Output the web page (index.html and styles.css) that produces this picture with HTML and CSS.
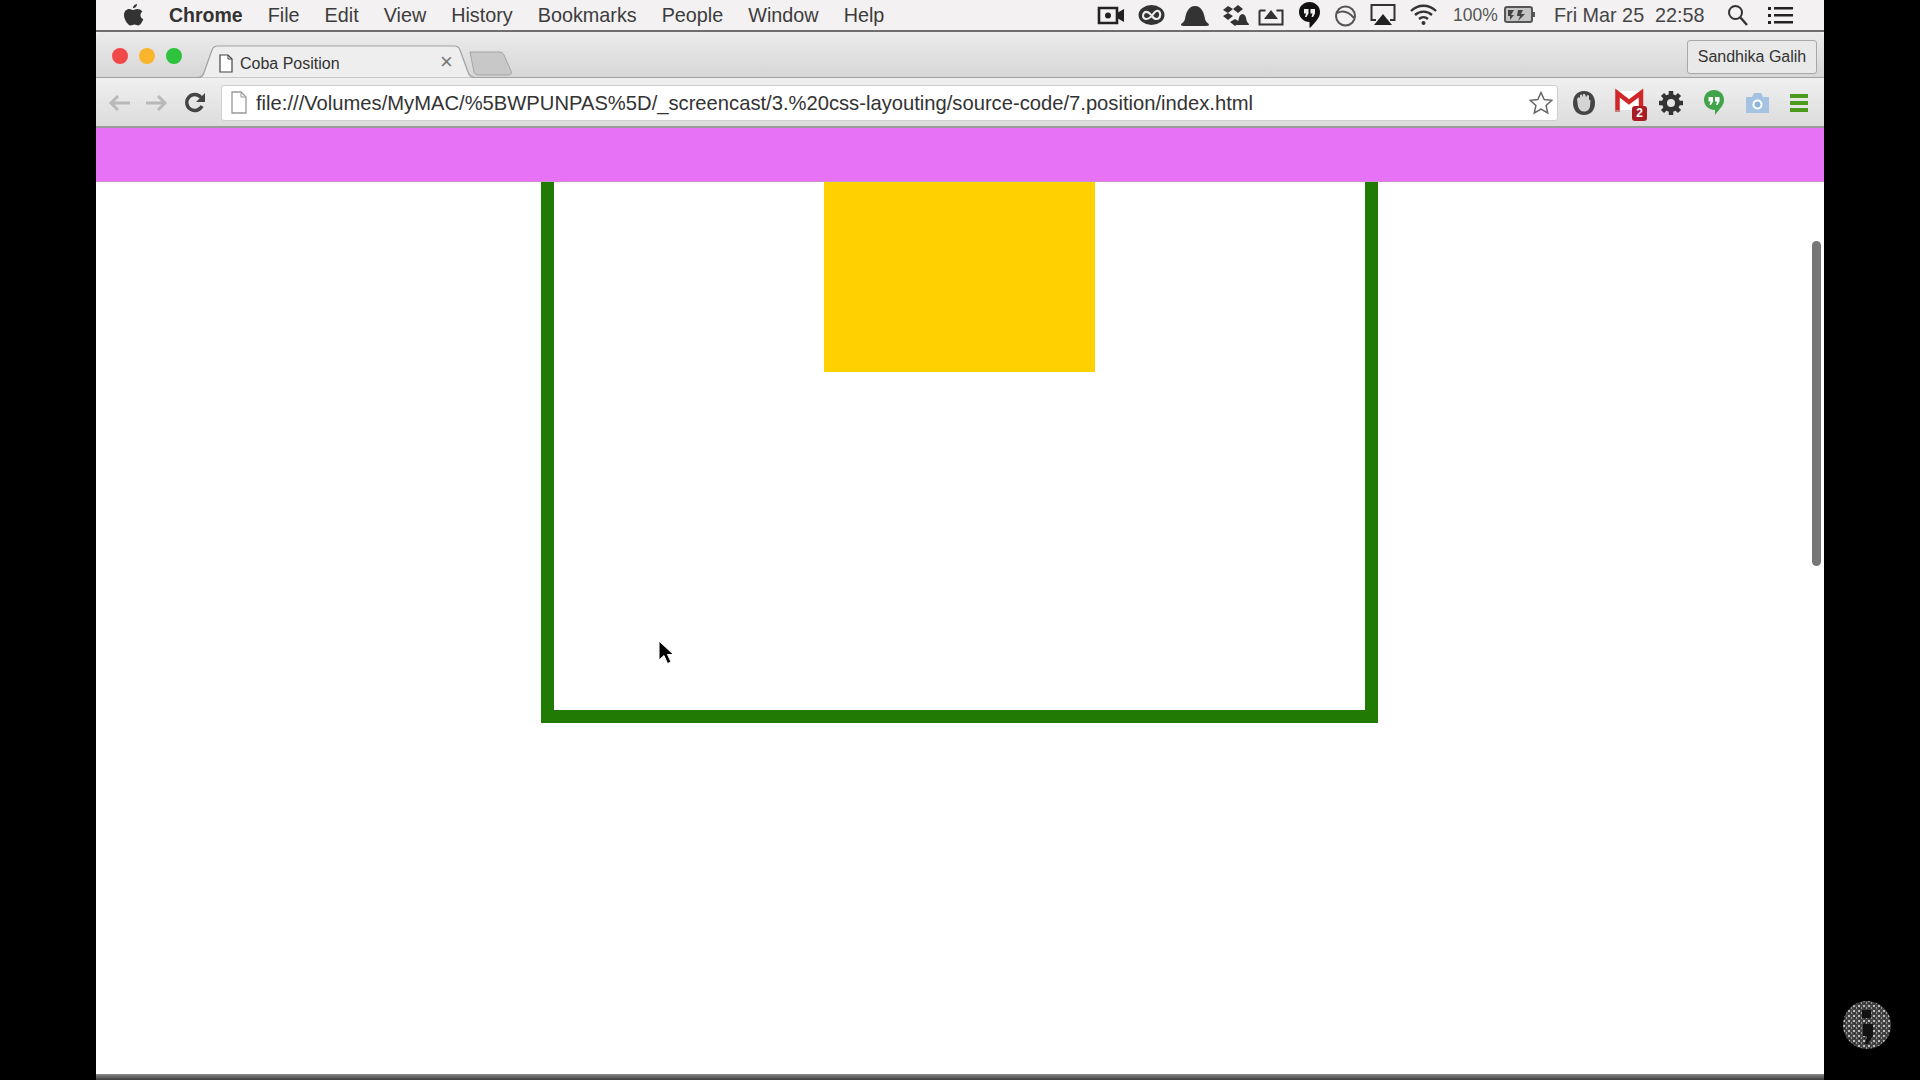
FILE: index.html
```html
<!DOCTYPE html>
<html lang="en">
<head>
<meta charset="utf-8">
<title>Coba Position</title>
<link rel="stylesheet" href="styles.css">
</head>
<body>
<div class="screen">
  <header class="menubar">
    <svg class="apple" width="22" height="24" viewBox="0 0 22 24"><path fill="#333" d="M15 1c.2 2-1.700 4.300-4 4.200C10.800 3.200 12.900 1.100 15 1zM20.500 8.500c-3 2-2.500 6.300.8 7.800-.9 2.500-3 6.200-5.100 6.200-1.300 0-2.100-.9-3.700-.9s-2.500.9-3.800.9C5.900 22.500 2 16.500 2 12.300 2 8.200 4.600 6.100 7.200 6.100c1.500 0 2.800 1 3.800 1s2.400-1.100 4.200-1.100c1.900 0 3.900.8 5.300 2.500z"/></svg>
    <nav class="menus">
      <span class="menu-app">Chrome</span>
      <span>File</span>
      <span>Edit</span>
      <span>View</span>
      <span>History</span>
      <span>Bookmarks</span>
      <span>People</span>
      <span>Window</span>
      <span>Help</span>
    </nav>
    <div class="tray">
      <svg width="41" height="24" viewBox="0 0 41 24"><path fill="none" stroke="#222" stroke-width="2.600" d="M2 5h18v15H2z"/><path fill="#222" d="M20 10l7-4v13l-7-4z"/><circle cx="11" cy="12.500" r="3" fill="#222"/></svg>
      <svg width="42" height="24" viewBox="0 0 42 24"><ellipse cx="13.500" cy="12" rx="13" ry="10" fill="#333"/><path fill="none" stroke="#eee" stroke-width="2.200" d="M13 12c-2-3-5-4-7-2s-1 6 2 6 6-3 8-6 5-3 6 0-1 6-3 6-4-1-5-3"/></svg>
      <svg width="42" height="24" viewBox="0 0 42 24"><path fill="#333" d="M1 22c0-2 3-2 4-6 1-7 4-13 10-13s9 6 10 13c1 4 4 4 4 6 0 1-2 1-14 1S1 23 1 22z"/></svg>
      <svg width="36" height="24" viewBox="0 0 36 24"><g fill="#333"><path d="M1 7l5-4 5 3-5 4zM11 6l5-4 5 4-5 4zM1 13l5-3 5 3-5 4zM8 19l5-3 5 3-5 4z"/><path d="M14 22c0-2 2-2 2.500-5 .5-4 2-6 4-6s3.500 2 4 6c.5 3 2.500 3 2.500 5z"/></g></svg>
      <svg width="41" height="24" viewBox="0 0 41 24"><path fill="none" stroke="#333" stroke-width="2" d="M1.500 7.500h6M18.500 7.500h6v14h-23v-14"/><path fill="#333" d="M6 16L13 7l7 9z"/></svg>
      <svg width="36" height="28" viewBox="0 0 36 28"><path fill="#111" d="M10.500 1C16.300 1 21 5.400 21 11c0 6-5 10-9 15l-1.500 1v-6C4.700 21 0 16.600 0 11S4.700 1 10.500 1z"/><path fill="#eee" d="M5 8h4.500v4.500L7.500 16H6l1-3.500H5zM11.500 8H16v4.500L14 16h-1.500l1-3.500h-2z"/></svg>
      <svg width="35" height="24" viewBox="0 0 35 24"><circle cx="10.500" cy="13" r="9.500" fill="none" stroke="#555" stroke-width="2"/><path fill="none" stroke="#555" stroke-width="2" d="M2 10c6-3 12-1 17 5"/></svg>
      <svg width="40" height="24" viewBox="0 0 40 24"><path fill="none" stroke="#333" stroke-width="2" d="M6 17H1.500V2h23v15H20"/><path fill="#222" d="M13 11l9 11H4z"/></svg>
      <svg width="43" height="24" viewBox="0 0 43 24"><g fill="none" stroke="#333" stroke-width="2.400"><path d="M1 8c7-7 18-7 25 0"/><path d="M5 12c5-4.500 12-4.500 17 0"/><path d="M9 16c3-2.500 6-2.500 9 0"/></g><circle cx="13.500" cy="20" r="2" fill="#333"/></svg>
      <span class="tray-pct">100%</span>
      <svg class="battery" width="32" height="18" viewBox="0 0 32 18"><rect x="1" y="1" width="27" height="15" rx="2" fill="#c4c4c4" stroke="#555" stroke-width="2"/><path fill="#444" d="M4 4h6l-3 5h3l-4 5v-4H4zM14 4h5l-2 4h4l-7 7 2-5h-3z"/><rect x="29" y="6" width="2" height="5" fill="#555"/></svg>
      <span class="tray-date">Fri Mar 25&nbsp; 22:58</span>
      <svg class="search" width="21" height="22" viewBox="0 0 21 22"><circle cx="8.500" cy="8.500" r="6.500" fill="none" stroke="#333" stroke-width="2"/><path stroke="#333" stroke-width="2.400" d="M13 13l7 8"/></svg>
      <svg class="list" width="25" height="18" viewBox="0 0 25 18"><path fill="#222" d="M0 1h3v3H0zM6 1h19v2.600H6zM0 8h3v3H0zM6 8h19v2.600H6zM0 15h3v3H0zM6 15h19v2.600H6z"/></svg>
    </div>
  </header>

  <section class="window">
    <div class="tabstrip">
      <div class="lights">
        <i class="light light-red"></i>
        <i class="light light-yellow"></i>
        <i class="light light-green"></i>
      </div>
      <div class="tab">
        <svg class="tab-shape" width="283" height="33" viewBox="0 0 283 33"><path fill="#eeeeee" stroke="#a0a0a0" stroke-width="1.200" d="M0 32.500h3c4 0 5-2 6-5L17 5c1-3 3-4 6-4h236c3 0 5 1 6 4l8 22c1 3 3 5.500 7 5.500h3"/></svg>
        <svg class="doc" width="14" height="19" viewBox="0 0 14 19"><path fill="#fff" stroke="#444" stroke-width="1.200" d="M1 1h8l4 4v13H1z"/><path fill="none" stroke="#444" d="M9 1v4h4"/></svg>
        <span class="tab-title">Coba Position</span>
        <span class="tab-close">×</span>
      </div>
      <svg class="newtab" width="44" height="25" viewBox="0 0 44 25"><path fill="#c9c8c9" stroke="#a5a5a5" d="M1 1h29c3 0 4 1 5 3l7 16c1 3 0 4-3 4H10c-3 0-4-1-5-3z"/></svg>
      <div class="profile">Sandhika Galih</div>
    </div>
    <div class="toolbar">
      <svg class="nav-icon" width="22" height="18" viewBox="0 0 22 18"><path fill="none" stroke="#b9b9b9" stroke-width="3" d="M10 2L3 9l7 7M3 9h19"/></svg>
      <svg class="nav-icon" width="22" height="18" viewBox="0 0 22 18"><path fill="none" stroke="#b9b9b9" stroke-width="3" d="M12 2l7 7-7 7M19 9H0"/></svg>
      <svg class="nav-icon" width="22" height="22" viewBox="0 0 22 22"><path fill="none" stroke="#444" stroke-width="3.400" d="M18 14a8 8 0 1 1-1-8.500"/><path fill="#444" d="M21 1v9h-9z"/></svg>
      <div class="omnibox">
        <svg class="omni-doc" width="16" height="23" viewBox="0 0 16 23"><path fill="#fff" stroke="#999" stroke-width="1.300" d="M1 1h9l5 5v16H1z"/><path fill="none" stroke="#999" d="M10 1v5h5"/></svg>
        <span class="url">file:///Volumes/MyMAC/%5BWPUNPAS%5D/_screencast/3.%20css-layouting/source-code/7.position/index.html</span>
        <svg class="star" width="24" height="24" viewBox="0 0 24 24"><path fill="#fff" stroke="#666" stroke-width="1.500" d="M12 1.500l3.200 7 7.600.8-5.700 5.100 1.600 7.500L12 18l-6.700 3.900 1.600-7.500L1.200 9.300l7.600-.8z"/></svg>
      </div>
      <div class="ext">
        <svg class="ext-shield" width="24" height="26" viewBox="0 0 24 26"><path fill="#444" d="M12 1c7 0 11 5 11 12s-4 12-11 12S1 20 1 13 5 1 12 1z"/><path fill="#d4d4d4" d="M5 9l1.500-2 1.500 1V5l1.800-.5L11 7V4h2l1 3 1.500-2 1.500.5v4l1.500 1-.5 6c-.5 3-3 5-6 5s-5-2-6-5z"/></svg>
        <span class="gmail">
          <svg width="33" height="32" viewBox="0 0 33 32"><path fill="#fff" d="M2 4h26v19H2z"/><path fill="none" stroke="#d02828" stroke-width="4.500" d="M3.500 23V6L15 15 27 6v17"/><path fill="none" stroke="#a81c24" d="M1 24h5M25 24h5"/></svg>
          <span class="gmail-badge">2</span>
        </span>
        <svg class="ext-gear" width="24" height="24" viewBox="0 0 24 24"><circle cx="12" cy="12" r="6.500" fill="none" stroke="#333" stroke-width="5"/><path stroke="#333" stroke-width="4.500" d="M12 0v5M12 19v5M0 12h5M19 12h5M3.500 3.500L7 7M17 17l3.500 3.500M20.500 3.500L17 7M7 17l-3.500 3.500"/></svg>
        <svg width="22" height="27" viewBox="0 0 22 27"><path fill="#3fa548" d="M11 1c5.800 0 10 4.300 10 10 0 5.800-5 9.500-9 15v-5C6 21 1 16.700 1 11S5.200 1 11 1z"/><path fill="#fff" d="M5.500 8H10v4.500L8 16H6.500l1-3.500h-2zM12 8h4.500v4.500L14.500 16H13l1-3.500h-2z"/></svg>
        <svg width="25" height="22" viewBox="0 0 25 22"><path fill="#a4c3e2" d="M1 5h6l2-4h7l2 4h6v16H1z"/><circle cx="12.500" cy="12.500" r="5" fill="#fff"/><circle cx="12.500" cy="12.500" r="3" fill="#8db3d8"/></svg>
        <svg width="18" height="18" viewBox="0 0 18 18"><path fill="#4a9a1c" d="M0 0h18v4H0zM0 7h18v4H0zM0 14h18v4H0z"/></svg>
      </div>
    </div>
    <div class="pinkbar"></div>
    <main class="page">
      <div class="greenbox">
        <div class="yellowbox"></div>
      </div>
      <div class="scrollthumb"></div>
      <svg class="cursor" width="16" height="25" viewBox="0 0 16 25"><path fill="#000" stroke="#fff" stroke-width="1" d="M1 1v19l5-4.500 3.500 8 3.500-1.500-3.500-7.500h6z"/></svg>
    </main>
    <div class="windowedge"></div>
  </section>

  <aside class="watermark">
    <svg width="48" height="50" viewBox="0 0 48 50">
      <defs>
        <pattern id="speckle" width="5" height="5" patternUnits="userSpaceOnUse">
          <rect width="5" height="5" fill="#444"/>
          <rect x="0" y="0" width="2" height="2" fill="#bbb"/>
          <rect x="3" y="2" width="1" height="2" fill="#999"/>
          <rect x="1" y="3" width="1" height="1" fill="#222"/>
        </pattern>
      </defs>
      <circle cx="24" cy="25" r="24" fill="url(#speckle)"/>
      <path fill="#111" d="M19 10h9v8h-9zM20 24h10v12l-5 8h-3l2-8h-4z"/>
    </svg>
  </aside>
</div>
</body>
</html>
```

FILE: styles.css
```css
* { box-sizing: border-box; }
html, body { margin: 0; height: 100%; overflow: hidden; background: #000; }
body { font-family: "Liberation Sans", Arial, sans-serif; color: #333; }

.screen {
  position: relative;
  width: 1728px;
  height: 1080px;
  margin-left: 96px;
  display: flex;
  flex-direction: column;
}

/* macOS menu bar */
.menubar {
  flex: 0 0 32px;
  display: flex;
  align-items: center;
  padding: 0 31px 0 26px;
  background: #f3f1f2;
  border-bottom: 2px solid #6e6e6e;
  font-size: 19.800px;
  color: #3c3c3c;
}
.apple { flex: none; margin-right: 25px; }
.menus { display: flex; gap: 25px; }
.menu-app { font-weight: 700; font-size: 19.500px; color: #333; }
.tray { margin-left: auto; display: flex; align-items: center; }
.tray-pct { font-size: 17.500px; width: 51px; color: #555; }
.battery { margin-right: 18px; }
.tray-date { font-size: 19.800px; color: #444; width: 173px; white-space: nowrap; }
.search { margin-right: 20px; }

/* Chrome window */
.window {
  flex: 1;
  min-height: 0;
  display: flex;
  flex-direction: column;
  background: #f3f1f2;
}
.tabstrip {
  flex: 0 0 46px;
  display: flex;
  align-items: flex-end;
  background: linear-gradient(#ececec, #d6d6d6);
  border-bottom: 1px solid #a2a2a2;
  padding-left: 16px;
  border-radius: 6px 6px 0 0;
}
.lights { display: flex; gap: 11px; align-self: flex-start; margin-top: 16px; margin-right: 14px; }
.light { width: 16px; height: 16px; border-radius: 50%; display: block; }
.light-red { background: #f2484a; }
.light-yellow { background: #fbb52c; }
.light-green { background: #2ec23f; }
.tab {
  position: relative;
  width: 283px;
  height: 32px;
  margin-left: -1px;
  margin-bottom: -1px;
  display: flex;
  align-items: center;
  padding: 3px 0 0 24px;
  flex: none;
}
.tab-shape { position: absolute; left: 0; top: -1px; }
.doc, .tab-title, .tab-close { position: relative; }
.doc { flex: none; margin-right: 7px; }
.tab-title { font-size: 16px; color: #333; }
.tab-close { position: absolute; left: 245px; top: 3px; font-size: 22px; color: #777; line-height: 26px; }
.newtab { flex: none; margin-left: -9px; margin-bottom: 1px; }
.profile {
  margin-left: auto;
  margin-right: 7px;
  align-self: flex-start;
  margin-top: 8px;
  width: 130px;
  height: 34px;
  border: 1px solid #a8a8a8;
  border-radius: 3px;
  background: #e9e9e9;
  font-size: 16px;
  line-height: 32px;
  text-align: center;
  color: #333;
}
.toolbar {
  flex: 0 0 50px;
  display: flex;
  align-items: center;
  padding: 1px 15px 0 12px;
  gap: 16px;
  background: linear-gradient(#f0f0f0, #dcdcdc);
  border-bottom: 2px solid #9a9a9a;
}
.nav-icon { flex: none; }
.omnibox {
  flex: none;
  width: 1337px;
  margin-left: -1px;
  height: 36px;
  display: flex;
  align-items: center;
  padding: 0 4px 0 9px;
  background: #fff;
  border: 1px solid #cfcfcf;
  border-radius: 3px;
}
.omni-doc { flex: none; margin-right: 9px; }
.url { font-size: 20.200px; color: #333; white-space: nowrap; padding-top: 2px; }
.star { margin-left: auto; flex: none; }
.ext { display: flex; align-items: center; gap: 20px; margin-left: -2px; }
.ext-shield { margin-right: -2px; }
.gmail { position: relative; display: block; height: 32px; margin-right: -8px; }
.gmail-badge {
  position: absolute;
  left: 18px;
  top: 19px;
  width: 15px;
  height: 15px;
  background: #a81c24;
  border-radius: 3px;
  color: #fff;
  font-size: 12px;
  font-weight: 700;
  line-height: 15px;
  text-align: center;
}
.pinkbar {
  flex: 0 0 54px;
  background: #e872f5;
  border-bottom: 1px solid #c98fd0;
}
.page {
  position: relative;
  flex: 1;
  min-height: 0;
  display: flex;
  justify-content: center;
  background: #fff;
}
.greenbox {
  width: 837px;
  height: 541px;
  margin-right: 1px;
  display: flex;
  justify-content: center;
  align-items: flex-start;
  border: 13px solid #217a04;
  border-top: 0;
  background: #fff;
}
.yellowbox { width: 271px; height: 190px; background: #ffd100; }
.scrollthumb {
  position: absolute;
  left: 1716px;
  top: 59px;
  width: 9px;
  height: 325px;
  border-radius: 5px;
  background: #777;
}
.cursor { position: absolute; left: 562px; top: 458px; }
.windowedge {
  flex: 0 0 6px;
  background: linear-gradient(#8a8a8a, #3a3a3a);
}
.watermark { position: absolute; left: 1747px; top: 1000px; line-height: 0; }
```
